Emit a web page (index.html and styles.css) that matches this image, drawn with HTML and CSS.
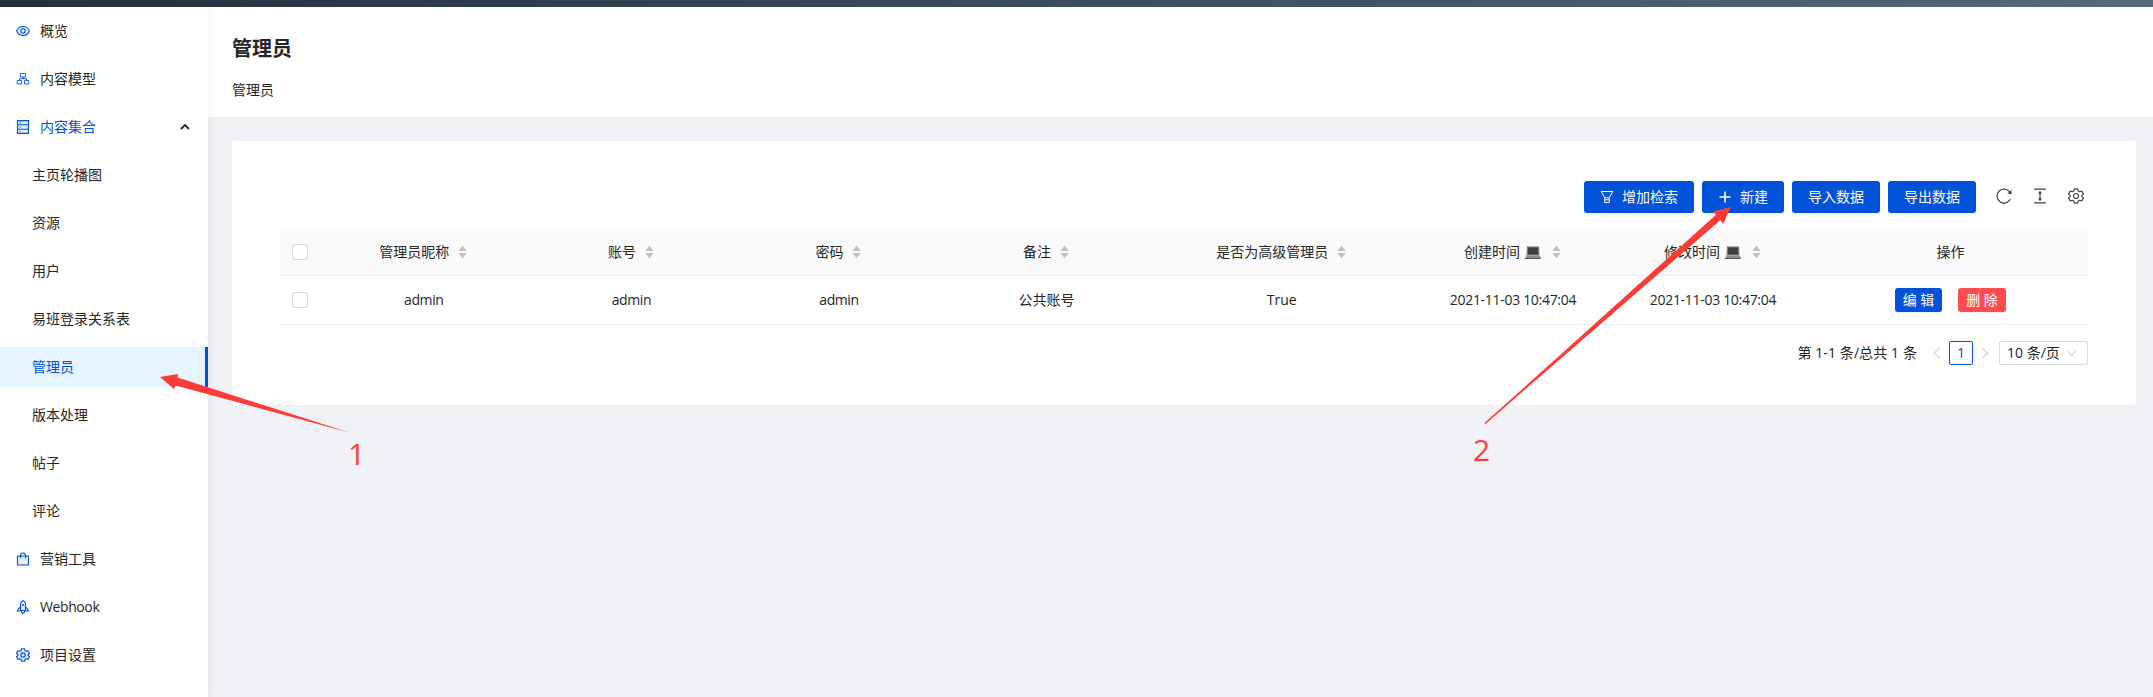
FILE: index.html
```html
<!DOCTYPE html>
<html lang="zh-CN">
<head>
<meta charset="utf-8">
<title>管理员</title>
<link rel="stylesheet" href="styles.css">
</head>
<body>
<svg class="sprite" aria-hidden="true">
  <symbol id="gear" viewBox="0 0 16 16"><path d="M6.300 .8h3.400l.5 2.100 1.500.9 2.100-.7 1.600 2.900-1.500 1.400v1.200l1.500 1.400-1.600 2.900-2.100-.7-1.500.9-.5 2.100H6.300l-.5-2.100-1.500-.9-2.100.7L.6 10l1.500-1.400V7.400L.6 6l1.600-2.900 2.100.7 1.500-.9z" stroke-linejoin="round"/><circle cx="8" cy="8" r="2.500"/></symbol>
  <symbol id="sort" viewBox="0 0 10 14"><path d="M5 0l4.700 6H.3zM5 14l4.700-6H.3z"/></symbol>
  <symbol id="laptop" viewBox="0 0 16 13"><path d="M2 .5h12l.5 9h-13z" fill="#777"/><path d="M3 1.500h10v7H3z" fill="#3d3d3d"/><path d="M1.500 9.500h13L16 12H0z" fill="#8b8b8b"/><path d="M0 12h16v1H0z" fill="#555"/></symbol>
</svg>
<header class="topbar"></header>
<div class="layout">
  <nav class="sidebar">
    <a class="item"><svg class="icon" viewBox="0 0 14 14"><path class="tint" d="M.6 7C1.900 3.900 4.200 2.500 7 2.500s5.100 1.400 6.400 4.500C12.100 10.100 9.800 11.500 7 11.500S1.900 10.100.6 7z"/><circle cx="7" cy="7" r="2.200"/></svg>概览</a>
    <a class="item"><svg class="icon thin" viewBox="0 0 14 14"><path d="M4.500 1.500h5v3.500h-5zM1.200 8.500h4.300v3.500H1.200zM8.500 8.500h4.300v3.500H8.500zM7 5v1.700M3.500 8.500V6.700h7v1.800"/></svg>内容模型</a>
    <a class="item open"><svg class="icon" viewBox="0 0 14 14"><path class="tint" d="M1.500 .6h11v12.800h-11z"/><path d="M1.500 4.700h11M1.500 9.300h11M3.500 2.700h1.200M3.500 7h1.200M3.500 11.300h1.200"/></svg><span class="grow">内容集合</span><svg class="caret" viewBox="0 0 10 6"><path d="M1 5l4-4 4 4"/></svg></a>
    <a class="item sub">主页轮播图</a>
    <a class="item sub">资源</a>
    <a class="item sub">用户</a>
    <a class="item sub">易班登录关系表</a>
    <a class="item sub selected">管理员</a>
    <a class="item sub">版本处理</a>
    <a class="item sub">帖子</a>
    <a class="item sub">评论</a>
    <a class="item"><svg class="icon" viewBox="0 0 14 14"><path class="tint" d="M1.500 4h11v9h-11z"/><path d="M4.500 6.200V3.500a2.500 2.500 0 0 1 5 0v2.700"/></svg>营销工具</a>
    <a class="item"><svg class="icon" viewBox="0 0 14 14"><path class="tint" d="M4.500 10.500V4.500C4.500 2.700 5.500 1.300 7 .6c1.500.7 2.500 2.100 2.500 3.900v6z"/><path d="M4.500 7L2.700 8.700 1.300 11h3.200M9.500 7l1.800 1.700L12.700 11H9.500M5.300 10.500c0 1.500.6 2.400 1.700 2.900 1.100-.5 1.700-1.400 1.700-2.900"/><circle class="solid" cx="7" cy="5" r="1"/></svg><span class="latin">Webhook</span></a>
    <a class="item"><svg class="icon gear"><use href="#gear"/></svg>项目设置</a>
  </nav>
  <main class="main">
    <div class="page-head">
      <h1>管理员</h1>
      <div class="crumb">管理员</div>
    </div>
    <section class="card">
      <div class="toolbar">
        <button class="btn filter"><svg class="btn-icon" viewBox="0 0 14 14"><path d="M1.200 1.500h11.600L9.300 7.700H4.700zM4.700 7.700v4.800h4.600V7.700M4.700 9.800h4.600"/></svg>增加检索</button>
        <button class="btn create"><svg class="btn-icon plus" viewBox="0 0 14 14"><path d="M7 1.500v11M1.500 7h11"/></svg>新建</button>
        <button class="btn">导入数据</button>
        <button class="btn">导出数据</button>
        <div class="tools">
          <svg viewBox="0 0 16 16"><path d="M14.300 11.200A7 7 0 1 1 13.800 4"/><path class="solid" d="M15.500 2v4.300l-4.200-.8z"/></svg>
          <svg viewBox="0 0 16 16"><path d="M2 1.200h12M2 14.800h12M8 4v8"/><path class="solid" d="M8 2.800l2 2.700H6zM8 13.200l2-2.700H6z"/></svg>
          <svg><use href="#gear"/></svg>
        </div>
      </div>
      <table class="grid">
        <colgroup><col class="c-check"><col class="c-text"><col class="c-text"><col class="c-text"><col class="c-text"><col class="c-flag"><col class="c-time"><col class="c-time"><col></colgroup>
        <thead><tr>
          <th><i class="check"></i></th>
          <th><div class="th">管理员昵称<svg class="sort"><use href="#sort"/></svg></div></th>
          <th><div class="th">账号<svg class="sort"><use href="#sort"/></svg></div></th>
          <th><div class="th">密码<svg class="sort"><use href="#sort"/></svg></div></th>
          <th><div class="th">备注<svg class="sort"><use href="#sort"/></svg></div></th>
          <th><div class="th">是否为高级管理员<svg class="sort"><use href="#sort"/></svg></div></th>
          <th><div class="th">创建时间<svg class="laptop"><use href="#laptop"/></svg><svg class="sort"><use href="#sort"/></svg></div></th>
          <th><div class="th">修改时间<svg class="laptop"><use href="#laptop"/></svg><svg class="sort"><use href="#sort"/></svg></div></th>
          <th>操作</th>
        </tr></thead>
        <tbody><tr>
          <td><i class="check"></i></td>
          <td class="latin">admin</td><td class="latin">admin</td><td class="latin">admin</td><td>公共账号</td><td>True</td>
          <td class="date">2021-11-03 10:47:04</td><td class="date">2021-11-03 10:47:04</td>
          <td><div class="actions"><button class="btn small">编 辑</button><button class="btn small danger">删 除</button></div></td>
        </tr></tbody>
      </table>
      <div class="pager">
        <span class="total">第 1-1 条/总共 1 条</span>
        <svg class="arrow" viewBox="0 0 8 12"><path d="M7 1L1 6l6 5"/></svg>
        <span class="page">1</span>
        <svg class="arrow" viewBox="0 0 8 12"><path d="M1 1l6 5-6 5"/></svg>
        <span class="size">10 条/页<svg viewBox="0 0 12 8"><path d="M1 1l5 6 5-6"/></svg></span>
      </div>
    </section>
  </main>
</div>
<svg class="notes" viewBox="0 0 2153 697">
  <path d="M160 377l18-3-.5 3.500L350 432.800 175.500 385.500 174 389z"/>
  <path d="M1731 207l-18 4.500 3 3.200L1484.500 423l1 1L1720.500 220l2.500 4z"/>
  <text x="348" y="465">1</text>
  <text x="1473" y="461">2</text>
</svg>
</body>
</html>
```
FILE: styles.css
```css
* { box-sizing: border-box; }
body {
  margin: 0;
  height: 697px;
  overflow: hidden;
  display: flex;
  flex-direction: column;
  background: #f0f2f5;
  color: #262626;
  font: 14px/22px "Open Sans", "Noto Sans CJK SC", sans-serif;
}
.sprite { position: absolute; width: 0; height: 0; }
svg { fill: none; stroke: currentColor; flex: none; }
.topbar { height: 7px; flex: none; background: linear-gradient(90deg, #252f3e, #546b78); }
.layout { flex: 1; display: flex; min-height: 0; }

.sidebar {
  width: 208px;
  flex: none;
  padding-top: 4px;
  background: #fff;
  box-shadow: 2px 0 8px rgba(29, 35, 41, .05);
  position: relative;
}
.item {
  display: flex;
  align-items: center;
  height: 40px;
  margin-bottom: 8px;
  padding: 0 18px 0 16px;
}
.icon { width: 14px; height: 14px; margin-right: 10px; color: #0052d9; stroke-width: 1.1; }
.thin { stroke-width: .9; }
.gear { fill: #e1efff; stroke-width: 1.3; }
.tint { fill: #e1efff; }
.open { color: #0052d9; }
.grow { flex: 1; }
.caret { width: 10px; height: 6px; color: #262626; stroke-width: 1.8; }
.sub { padding-left: 32px; }
.selected { background: #e6f4ff; color: #0052d9; border-right: 3px solid #0052d9; }
.latin { letter-spacing: -.4px; }

.main { flex: 1; min-width: 0; }
.page-head { height: 110px; padding: 26px 24px 0; background: #fff; }
h1 { margin: 0; font-size: 20px; line-height: 32px; font-weight: 700; }
.crumb { margin-top: 14px; }
.card {
  height: 264px;
  margin: 24px 17px 0 24px;
  padding: 40px 48px 0;
  background: #fff;
  border-radius: 3px;
}
.toolbar { display: flex; justify-content: flex-end; gap: 8px; }
.btn {
  display: flex;
  align-items: center;
  justify-content: center;
  width: 88px;
  height: 32px;
  padding: 0;
  border: 0;
  border-radius: 3px;
  background: #0052d9;
  color: #fff;
  font: inherit;
  box-shadow: 0 2px 0 rgba(0, 0, 0, .045);
}
.filter { width: 110px; }
.create { width: 82px; }
.btn-icon { width: 14px; height: 14px; margin-right: 8px; }
.plus { stroke-width: 1.6; }
.tools { display: flex; gap: 20px; padding: 7px 4px 0 12px; color: #404040; }
.tools svg { width: 16px; height: 16px; stroke-width: 1.2; }
.solid { fill: currentColor; stroke: none; }

.grid { width: 100%; margin-top: 16px; table-layout: fixed; border-collapse: separate; border-spacing: 0; }
.c-check { width: 40px; }
.c-text { width: 207.6px; }
.c-flag { width: 262.600px; }
.c-time { width: 200px; }
th, td { padding: 0; text-align: center; font-weight: 400; border-bottom: 1px solid #f0f0f0; }
th { height: 47px; background: #fafafa; }
td { height: 49px; }
.th { display: flex; align-items: center; justify-content: center; padding-right: 1px; }
.check { display: block; width: 16px; height: 16px; margin: 0 auto; border: 1px solid #d9d9d9; border-radius: 2px; background: #fff; }
.sort { width: 9px; height: 14px; margin-left: 9px; fill: #bfbfbf; stroke: none; }
.laptop { width: 16px; height: 13px; margin-left: 5px; stroke: none; }
.laptop + .sort { margin-left: 11px; }
.date { letter-spacing: -.3px; }
.actions { display: flex; justify-content: center; gap: 16px; }
.small { width: 47px; height: 24px; }
.danger { width: 48px; background: #ff4d4f; }

.pager { display: flex; align-items: center; height: 24px; margin-top: 16px; justify-content: flex-end; }
.total { margin-right: 16px; letter-spacing: .1px; }
.arrow { width: 8px; height: 12px; color: #bfbfbf; }
.page { width: 24px; height: 24px; margin: 0 8px; border: 1px solid #0052d9; border-radius: 2px; color: #0052d9; text-align: center; }
.size { display: flex; align-items: center; justify-content: space-between; width: 89px; height: 24px; margin-left: 10px; padding: 0 10px 0 7px; border: 1px solid #d9d9d9; border-radius: 2px; }
.size svg { width: 11px; height: 8px; color: #bfbfbf; }

/* Callout arrows and step numbers over the page */
.notes { position: absolute; left: 0; top: 0; width: 2153px; height: 697px; fill: #ff3b38; stroke: none; font: 30px "Open Sans", sans-serif; }
```
